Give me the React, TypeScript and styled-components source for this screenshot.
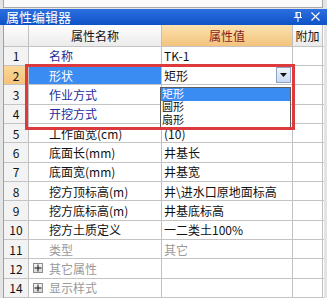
import styled, { createGlobalStyle } from "styled-components";

const GlobalStyle = createGlobalStyle`
  html, body {
    margin: 0;
    padding: 0;
  }
  body {
    background: #e6e6e6;
    font-family: "Noto Sans CJK SC", "Liberation Sans", sans-serif;
  }
`;

const Window = styled.div`
  position: relative;
  width: 327px;
  height: 298px;
  overflow: hidden;
  background: #e4e4e4;
  display: flex;
  flex-direction: column;
`;

const TopStrip = styled.div`
  height: 9px;
  margin: 0 4px 1px 3px;
  box-sizing: border-box;
  background: #fafafa;
  border: 1px solid #a8a8a8;
  border-top: none;
`;

const TitleBar = styled.div`
  height: 16px;
  display: flex;
  align-items: center;
  justify-content: space-between;
  padding: 0 7px 0 6px;
  background: linear-gradient(#2c6fe0, #0d52c6);
  color: #fff;
  font-size: 13px;
  line-height: 16px;
`;

const TitleTools = styled.div`
  display: flex;
  align-items: center;
  gap: 9px;
`;

const Grid = styled.div`
  margin-left: 3px;
  width: 320px;
  border-left: 1px solid #a0a0a0;
  background: #fff;
`;

const Row = styled.div<{ $header?: boolean }>`
  display: grid;
  grid-template-columns: 25px 133px 131px 30px;
  height: ${(p) => (p.$header ? "22px" : "19.33px")};
  box-sizing: border-box;
  border-bottom: 1px solid #c4c4c4;
  font-size: 12px;
`;

const Cell = styled.div`
  display: flex;
  align-items: center;
  min-width: 0;
  overflow: hidden;
  white-space: nowrap;
  border-right: 1px solid #c0c0c0;
  box-sizing: border-box;
`;

const HeadCell = styled(Cell)<{ $accent?: boolean }>`
  justify-content: center;
  color: ${(p) => (p.$accent ? "#8a1c1c" : "#111")};
  background: ${(p) =>
    p.$accent
      ? "linear-gradient(#fbe2b0, #f3c37c)"
      : "linear-gradient(#fefefe, #ebebeb)"};
`;

const NumCell = styled(Cell)<{ $active?: boolean }>`
  justify-content: center;
  color: #111;
  background: ${(p) =>
    p.$active ? "linear-gradient(#fbd898, #f5c27a)" : "#f3f3f3"};
`;

type Tone = "blue" | "black" | "gray" | "selected";

const toneColor: Record<Tone, string> = {
  blue: "#1e2c9a",
  black: "#111",
  gray: "#9a9a9a",
  selected: "#fff",
};

const NameCell = styled(Cell)<{ $tone: Tone }>`
  padding-left: 20px;
  position: relative;
  color: ${(p) => toneColor[p.$tone]};
  background: ${(p) => (p.$tone === "selected" ? "#3b8cf2" : "#fff")};
  border-top: ${(p) => (p.$tone === "selected" ? "1px solid #fff" : "none")};
`;

const ValueCell = styled(Cell)<{ $muted?: boolean }>`
  padding-left: 2px;
  color: ${(p) => (p.$muted ? "#9a9a9a" : "#111")};
  justify-content: space-between;
`;

const Expander = styled.span`
  position: absolute;
  left: 4px;
  top: 4px;
  width: 10px;
  height: 10px;
  box-sizing: border-box;
  border: 1px solid #8c8c8c;
  background: linear-gradient(#f4f4f4, #d8d8d8);
  display: flex;
  align-items: center;
  justify-content: center;
`;

const DropButton = styled.span`
  width: 15px;
  height: 16px;
  margin-right: 1px;
  box-sizing: border-box;
  border: 1px solid #8ea4c4;
  background: linear-gradient(#eef4fc, #c8daf2);
  display: flex;
  align-items: center;
  justify-content: center;
`;

const DropList = styled.div`
  position: absolute;
  left: 160px;
  top: 87px;
  width: 131px;
  height: 41px;
  box-sizing: border-box;
  border: 1px solid #5c5c5c;
  background: #fff;
  font-family: "Liberation Sans", "Noto Sans CJK SC", sans-serif;
  font-size: 11px;
`;

const DropItem = styled.div<{ $active?: boolean }>`
  height: 13px;
  line-height: 13px;
  padding-left: 1px;
  color: ${(p) => (p.$active ? "#fff" : "#111")};
  background: ${(p) => (p.$active ? "#3b8cf2" : "transparent")};
`;

const Annotation = styled.div`
  position: absolute;
  left: 25px;
  top: 64px;
  width: 270px;
  height: 66px;
  box-sizing: border-box;
  border: 3px solid #dc3a3c;
  pointer-events: none;
`;

type Item = {
  no: string;
  name: string;
  value: string;
  tone: Tone;
  group?: boolean;
  combo?: boolean;
};

const items: Item[] = [
  { no: "1", name: "名称", value: "TK-1", tone: "blue" },
  { no: "2", name: "形状", value: "矩形", tone: "selected", combo: true },
  { no: "3", name: "作业方式", value: "", tone: "blue" },
  { no: "4", name: "开挖方式", value: "", tone: "blue" },
  { no: "5", name: "工作面宽(cm)", value: "(10)", tone: "black" },
  { no: "6", name: "底面长(mm)", value: "井基长", tone: "black" },
  { no: "7", name: "底面宽(mm)", value: "井基宽", tone: "black" },
  { no: "8", name: "挖方顶标高(m)", value: "井\\进水口原地面标高", tone: "black" },
  { no: "9", name: "挖方底标高(m)", value: "井基底标高", tone: "black" },
  { no: "10", name: "挖方土质定义", value: "一二类土100%", tone: "black" },
  { no: "11", name: "类型", value: "其它", tone: "gray" },
  { no: "12", name: "其它属性", value: "", tone: "gray", group: true },
  { no: "14", name: "显示样式", value: "", tone: "gray", group: true },
];

function PinIcon() {
  return (
    <svg width="8" height="10" viewBox="0 0 8 10" fill="none" stroke="#fff" strokeWidth="1">
      <path d="M1.5 0.5h5M2 0.5v5M3 0.5v5M6.5 0.5v5M0 5.5h8M4 5.5v4.5" />
    </svg>
  );
}

function CloseIcon() {
  return (
    <svg width="9" height="9" viewBox="0 0 9 9" stroke="#fff" strokeWidth="1.1">
      <path d="M0.5 0.5l8 8M8.5 0.5l-8 8" />
    </svg>
  );
}

export default function App() {
  return (
    <>
      <GlobalStyle />
      <Window>
        <TopStrip />
        <TitleBar>
          <span>属性编辑器</span>
          <TitleTools>
            <PinIcon />
            <CloseIcon />
          </TitleTools>
        </TitleBar>
        <Grid>
          <Row $header>
            <HeadCell />
            <HeadCell>属性名称</HeadCell>
            <HeadCell $accent>属性值</HeadCell>
            <HeadCell>附加</HeadCell>
          </Row>
          {items.map((it) => (
            <Row key={it.no}>
              <NumCell $active={it.tone === "selected"}>{it.no}</NumCell>
              <NameCell $tone={it.tone}>
                {it.group && (
                  <Expander>
                    <svg width="8" height="8" viewBox="0 0 8 8" stroke="#111" strokeWidth="1">
                      <path d="M0.5 4h7M4 0.5v7" />
                    </svg>
                  </Expander>
                )}
                {it.name}
              </NameCell>
              <ValueCell $muted={it.tone === "gray"}>
                <span>{it.value}</span>
                {it.combo && (
                  <DropButton>
                    <svg width="7" height="4" viewBox="0 0 7 4">
                      <path d="M0 0h7L3.5 4z" fill="#111" />
                    </svg>
                  </DropButton>
                )}
              </ValueCell>
              <Cell />
            </Row>
          ))}
        </Grid>
        <DropList>
          <DropItem $active>矩形</DropItem>
          <DropItem>圆形</DropItem>
          <DropItem>扇形</DropItem>
        </DropList>
        <Annotation />
      </Window>
    </>
  );
}
